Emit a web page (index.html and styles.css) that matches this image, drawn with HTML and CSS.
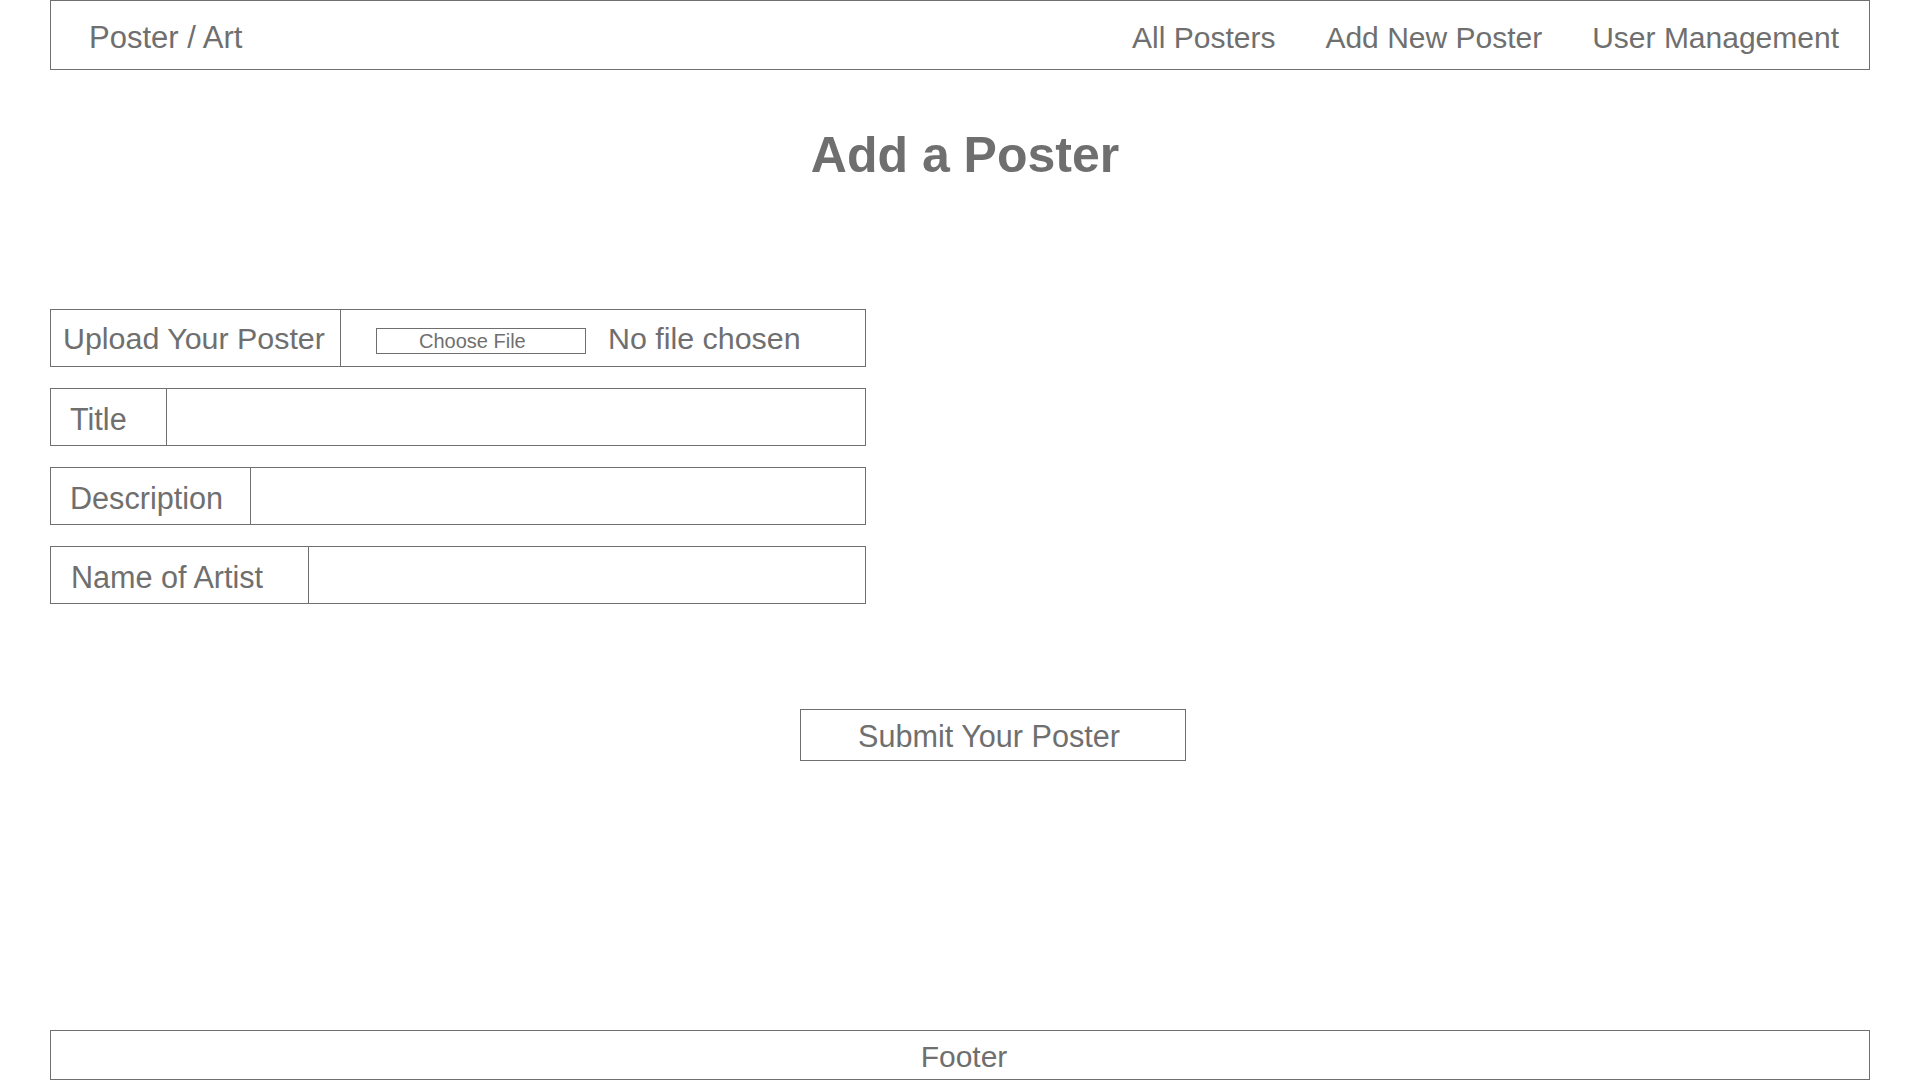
FILE: index.html
```html
<!DOCTYPE html>
<html lang="en">
<head>
<meta charset="utf-8">
<title>Add a Poster</title>
<link rel="stylesheet" href="styles.css">
</head>
<body>
<div class="page">
  <nav class="nav">
    <div class="brand">Poster / Art</div>
    <div class="links">
      <a class="link" href="#">All Posters</a>
      <a class="link" href="#">Add New Poster</a>
      <a class="link" href="#">User Management</a>
    </div>
  </nav>

  <h1 class="title">Add a Poster</h1>

  <form class="form">
    <div class="row">
      <div class="label label-upload">Upload Your Poster</div>
      <div class="field field-file">
        <span class="file-btn">Choose File</span>
        <span class="file-name">No file chosen</span>
      </div>
    </div>
    <div class="row">
      <div class="label label-title">Title</div>
      <div class="field"></div>
    </div>
    <div class="row">
      <div class="label label-desc">Description</div>
      <div class="field"></div>
    </div>
    <div class="row">
      <div class="label label-artist">Name of Artist</div>
      <div class="field"></div>
    </div>
  </form>

  <div class="actions">
    <button class="submit" type="button">Submit Your Poster</button>
  </div>

  <footer class="footer">Footer</footer>
</div>
</body>
</html>
```

FILE: styles.css
```css
* { box-sizing: border-box; }
html, body { margin: 0; padding: 0; background: #fff; }
body {
  font-family: "Liberation Sans", Arial, Helvetica, sans-serif;
  color: #6f6f6f;
}
.page {
  min-height: 100vh;
  display: flex;
  flex-direction: column;
  padding: 0 50px;
}
.nav {
  height: 70px;
  border: 1px solid #6f6f6f;
  display: flex;
  align-items: center;
  justify-content: space-between;
  padding: 5px 30px 0 38px;
  font-size: 30px;
}
.brand { font-size: 31px; }
.links { display: flex; gap: 50px; }
.link { color: #6f6f6f; text-decoration: none; }

.title {
  margin: 55px 0 0;
  padding-left: 10px;
  font-size: 50px;
  line-height: 60px;
  font-weight: 700;
  text-align: center;
}

.form {
  margin-top: 124px;
  width: 816px;
  display: flex;
  flex-direction: column;
  gap: 21px;
}
.row {
  height: 58px;
  border: 1px solid #6f6f6f;
  display: flex;
}
.label {
  display: flex;
  align-items: center;
  border-right: 1px solid #6f6f6f;
  font-size: 30.6px;
  padding-top: 4px;
  padding-left: 19px;
  white-space: nowrap;
}
.label-upload { width: 290px; font-size: 30.4px; padding-left: 12px; padding-top: 0; }
.label-title { width: 116px; }
.label-desc { width: 200px; }
.label-artist { width: 258px; padding-left: 20px; }
.field { flex: 1; display: flex; align-items: center; }
.field-file { padding-left: 35px; }
.file-btn {
  width: 210px;
  height: 26px;
  margin-top: 6px;
  border: 1px solid #6f6f6f;
  font-size: 20px;
  line-height: 24px;
  padding-left: 42px;
}
.file-name { margin-left: 22px; font-size: 30.4px; }

.actions { margin-top: 105px; padding-left: 750px; }
.submit {
  width: 386px;
  height: 52px;
  border: 1px solid #6f6f6f;
  background: #fff;
  color: #6f6f6f;
  font-family: "Liberation Sans", Arial, Helvetica, sans-serif;
  font-size: 30.6px;
  padding: 3px 8px 0 0;
}

.footer {
  margin-top: auto;
  height: 50px;
  border: 1px solid #6f6f6f;
  display: flex;
  align-items: center;
  justify-content: center;
  padding: 3px 0 0 8px;
  font-size: 30px;
}
```
